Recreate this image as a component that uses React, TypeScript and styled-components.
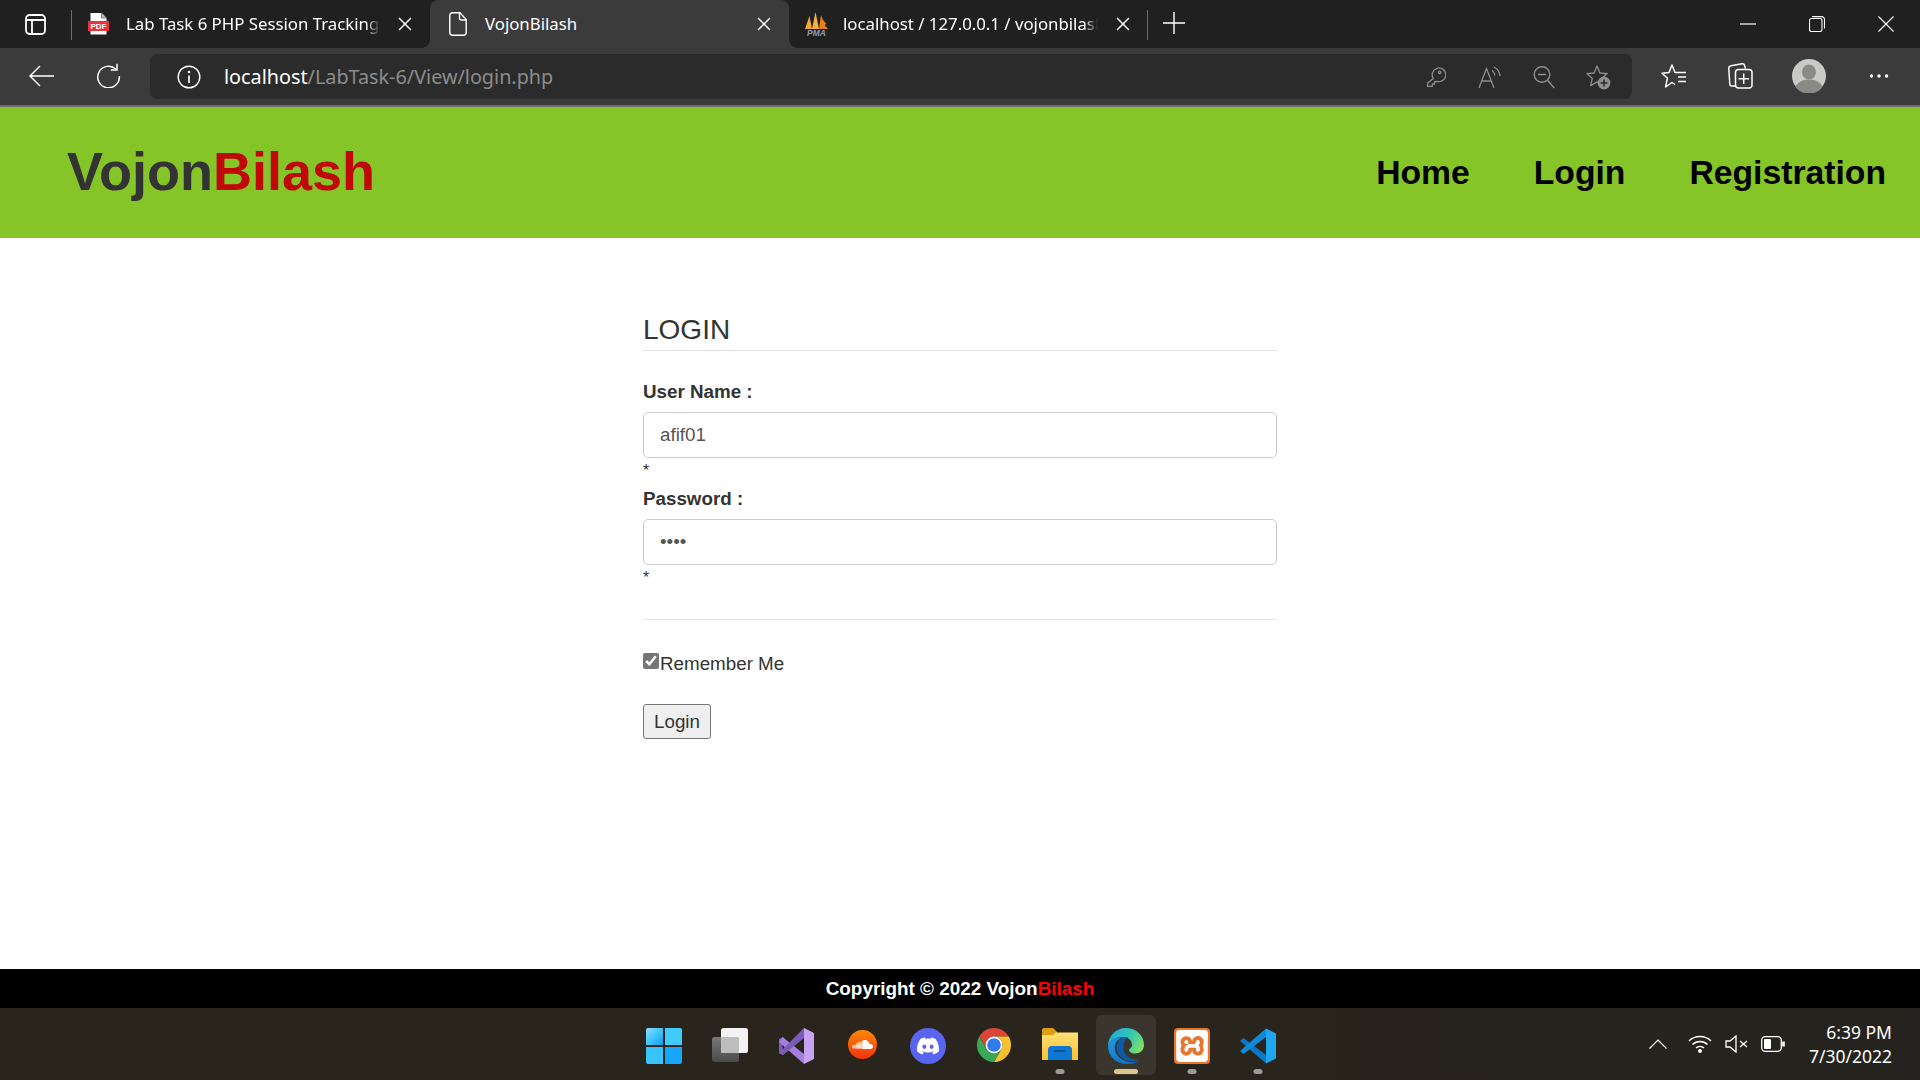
import type { FC, ReactNode } from 'react'
import { FaDiscord, FaSoundcloud } from 'react-icons/fa'
import { SiXampp } from 'react-icons/si'
import styled, { createGlobalStyle } from 'styled-components'

const GlobalStyle = createGlobalStyle`
  html, body {
    margin: 0;
    padding: 0;
    background: #fff;
  }
  * {
    box-sizing: border-box;
  }
`

const TABS: Array<{
  title: string
  icon: ReactNode
  active?: boolean
  width: number
  pad: number
  gap: number
  right: number
}> = [
  { title: 'Lab Task 6 PHP Session Tracking', icon: <PdfIcon />, width: 358, pad: 16, gap: 17, right: 18 },
  { title: 'VojonBilash', icon: <DocIcon />, active: true, width: 359, pad: 19, gap: 18, right: 18 },
  { title: 'localhost / 127.0.0.1 / vojonbilash', icon: <PmaIcon />, width: 358, pad: 15, gap: 14, right: 17 }
]

const App: FC = () => {
  return (
    <Page>
      <GlobalStyle />
      <TabStrip>
        <PanelButton>
          <svg width="21" height="21" viewBox="0 0 21 21" fill="none" stroke="#fff" strokeWidth="1.8">
            <rect x="1" y="1" width="19" height="19" rx="3.5" />
            <path d="M1 6h19M7 6v14" />
          </svg>
        </PanelButton>
        <StripDivider />
        {TABS.map((tab) => (
          <Tab key={tab.title} $active={tab.active} $width={tab.width} $pad={tab.pad} $right={tab.right}>
            {tab.icon}
            <TabTitle $gap={tab.gap} $fade={!tab.active}>
              {tab.title}
            </TabTitle>
            <TabClose>
              <svg width="14" height="14" viewBox="0 0 14 14" stroke="#fff" strokeWidth="1.5">
                <path d="M1 1l12 12M13 1L1 13" />
              </svg>
            </TabClose>
          </Tab>
        ))}
        <StripDivider />
        <NewTab>
          <svg width="22" height="22" viewBox="0 0 22 22" stroke="#fff" strokeWidth="1.4">
            <path d="M11 0v22M0 11h22" />
          </svg>
        </NewTab>
        <WindowControls>
          <WindowButton>
            <svg width="16" height="16" viewBox="0 0 16 16" stroke="#fff" strokeWidth="1.2">
              <path d="M0 8h16" />
            </svg>
          </WindowButton>
          <WindowButton>
            <svg width="16" height="16" viewBox="0 0 16 16" fill="none" stroke="#fff" strokeWidth="1.1">
              <rect x="0.5" y="2.5" width="12.5" height="13" rx="2" />
              <path d="M3 0.6h9.5a3 3 0 0 1 3 3v9" />
            </svg>
          </WindowButton>
          <WindowButton>
            <svg width="16" height="16" viewBox="0 0 16 16" stroke="#fff" strokeWidth="1.2">
              <path d="M0.5 0.5l15 15M15.5 0.5l-15 15" />
            </svg>
          </WindowButton>
        </WindowControls>
      </TabStrip>

      <Toolbar>
        <ToolButton $width={67}>
          <svg width="25" height="22" viewBox="0 0 25 22" fill="none" stroke="#fff" strokeWidth="1.5">
            <path d="M25 11H1.5M11 1L1 11l10 10" />
          </svg>
        </ToolButton>
        <ToolButton $width={67}>
          <svg width="25" height="25" viewBox="0 0 25 25" fill="none" stroke="#fff" strokeWidth="1.5">
            <path d="M20 6.2A10.8 10.8 0 1 0 23.3 13" />
            <path d="M21 0.8v6.2h-6.2" />
          </svg>
        </ToolButton>
        <AddressBar>
          <svg width="24" height="24" viewBox="0 0 24 24" fill="none" stroke="#fff" strokeWidth="1.4">
            <circle cx="12" cy="12" r="10.8" />
            <path d="M12 10.5v7.5" strokeWidth="1.7" />
            <circle cx="12" cy="7" r="0.6" fill="#fff" />
          </svg>
          <Url>
            localhost<UrlPath>/LabTask-6/View/login.php</UrlPath>
          </Url>
          <AddressActions>
            <AddressAction>
              <svg width="20" height="22" viewBox="0 0 20 22" fill="none" stroke="#8f8f8f" strokeWidth="1.3">
                <path d="M7.3 12.5A6.8 6.8 0 1 1 11 15.3L8.6 15.6v2.4H6.3v2.4H1.6V17z" />
                <circle cx="13.6" cy="6.3" r="1.2" />
              </svg>
            </AddressAction>
            <AddressAction>
              <svg width="24" height="24" viewBox="0 0 24 24" fill="none" stroke="#8f8f8f" strokeWidth="1.3">
                <path d="M1 23L8.5 3.5 16 23M3.6 16h10" />
                <path d="M14 5.5a7 7 0 0 1 3 5M16 2a11 11 0 0 1 6 9" />
              </svg>
            </AddressAction>
            <AddressAction>
              <svg width="22" height="24" viewBox="0 0 22 24" fill="none" stroke="#8f8f8f" strokeWidth="1.4">
                <circle cx="9" cy="9.5" r="7.8" />
                <path d="M5 9.5h8M14.5 15.2l6.8 7.8" />
              </svg>
            </AddressAction>
            <AddressAction>
              <svg width="26" height="26" viewBox="0 0 26 26" fill="none">
                <path
                  d="M12 2l2.9 7 7.3.6-5.5 4.8 1.6 7.2L12 17.9l-6.3 3.7 1.6-7.2L1.8 9.6 9.1 9z"
                  stroke="#8f8f8f"
                  strokeWidth="1.3"
                  strokeLinejoin="round"
                />
                <circle cx="19" cy="19" r="6.4" fill="#8f8f8f" />
                <path d="M19 15.5v7M15.5 19h7" stroke="#2b2b2b" strokeWidth="1.5" />
              </svg>
            </AddressAction>
          </AddressActions>
        </AddressBar>
        <ToolGroup>
          <ToolButton $width={68}>
            <svg width="26" height="26" viewBox="0 0 26 26" fill="none" stroke="#fff" strokeWidth="1.5" strokeLinejoin="round">
              <path d="M17.5 9.5H14L11 2 8 9.5l-7 .8 5.4 4.8-1.8 8.9 6.4-4.5 3 2" />
              <path d="M17 9.5h8M17 14h8M17 18.5h8" />
            </svg>
          </ToolButton>
          <ToolButton $width={64}>
            <svg width="25" height="27" viewBox="0 0 25 27" fill="none" stroke="#fff" strokeWidth="1.5">
              <path d="M7.5 24L3.5 24c-1 0-1.500-.8-1.700-1.700L.8 6.5C.7 5 1.500 4 3 3.700L14 1.700c1.300-.2 2.300.5 2.600 1.800l.8 3" />
              <rect x="7.5" y="7.5" width="16.5" height="18.5" rx="3" />
              <path d="M15.7 11.5v10.5M10.500 16.700h10.500" />
            </svg>
          </ToolButton>
          <ToolButton $width={74}>
            <svg width="34" height="34" viewBox="0 0 34 34">
              <circle cx="17" cy="17" r="17" fill="#c9c9c5" />
              <ellipse cx="17" cy="13" rx="7" ry="7.6" fill="#8a8a86" />
              <path d="M3.5 28c2-5 7-7.5 13.5-7.5S28.5 23 30.5 28A17 17 0 0 1 3.5 28z" fill="#8a8a86" />
            </svg>
          </ToolButton>
          <ToolButton $width={66}>
            <svg width="20" height="6" viewBox="0 0 20 6" fill="#fff">
              <circle cx="2.5" cy="3" r="1.7" />
              <circle cx="10" cy="3" r="1.7" />
              <circle cx="17.5" cy="3" r="1.7" />
            </svg>
          </ToolButton>
        </ToolGroup>
      </Toolbar>

      <Header>
        <Logo>
          Vojon<LogoAccent>Bilash</LogoAccent>
        </Logo>
        <Nav>
          <NavLink>Home</NavLink>
          <NavLink>Login</NavLink>
          <NavLink>Registration</NavLink>
        </Nav>
      </Header>

      <Main>
        <LoginForm onSubmit={(e) => e.preventDefault()}>
          <FormTitle>LOGIN</FormTitle>
          <Rule />
          <Field>
            <FieldLabel>User Name :</FieldLabel>
            <TextInput type="text" defaultValue="afif01" />
            <Required>*</Required>
          </Field>
          <Field>
            <FieldLabel>Password :</FieldLabel>
            <TextInput type="password" defaultValue="1234" />
            <Required>*</Required>
          </Field>
          <LowerRule />
          <RememberRow>
            <RememberBox type="checkbox" defaultChecked />
            Remember Me
          </RememberRow>
          <SubmitButton type="submit">Login</SubmitButton>
        </LoginForm>
      </Main>

      <Footer>
        Copyright © 2022 Vojon<FooterAccent>Bilash</FooterAccent>
      </Footer>

      <Taskbar>
        <TaskIcons>
          <TaskCell>
            <StartIcon />
          </TaskCell>
          <TaskCell>
            <TaskViewIcon />
          </TaskCell>
          <TaskCell>
            <VisualStudioIcon />
          </TaskCell>
          <TaskCell>
            <SoundCloudBadge>
              <FaSoundcloud size={21} color="#fff" />
            </SoundCloudBadge>
          </TaskCell>
          <TaskCell>
            <DiscordBadge>
              <FaDiscord size={24} color="#fff" />
            </DiscordBadge>
          </TaskCell>
          <TaskCell>
            <ChromeIcon />
          </TaskCell>
          <TaskCell $dot>
            <ExplorerIcon />
          </TaskCell>
          <TaskCell $current>
            <EdgeIcon />
          </TaskCell>
          <TaskCell $dot>
            <XamppBadge>
              <SiXampp size={32} color="#fff" />
            </XamppBadge>
          </TaskCell>
          <TaskCell $dot>
            <VsCodeIcon />
          </TaskCell>
        </TaskIcons>
        <Tray>
          <svg width="18" height="10" viewBox="0 0 18 10" fill="none" stroke="#fff" strokeWidth="1.2">
            <path d="M0.5 9.5L9 1l8.5 8.5" />
          </svg>
          <TrayIcons>
            <svg width="24" height="18" viewBox="0 0 24 18" fill="none" stroke="#fff" strokeWidth="1.5">
              <path d="M1 6a16 16 0 0 1 22 0M4.5 9.5a11 11 0 0 1 15 0M8 13a6 6 0 0 1 8 0" />
              <circle cx="12" cy="16" r="1.2" fill="#fff" />
            </svg>
            <svg width="23" height="18" viewBox="0 0 23 18" fill="none" stroke="#fff" strokeWidth="1.3">
              <path d="M1 6v6h4l6 5V1L5 6z" />
              <path d="M15 6l7 6M22 6l-7 6" />
            </svg>
            <svg width="24" height="16" viewBox="0 0 24 16" fill="none" stroke="#fff" strokeWidth="1.3">
              <rect x="0.7" y="0.7" width="19.6" height="14.6" rx="3.5" />
              <rect x="3" y="3" width="7" height="10" rx="1" fill="#fff" stroke="none" />
              <path d="M22.5 5.5v5" strokeWidth="2.6" />
            </svg>
          </TrayIcons>
          <Clock>
            <ClockLine>6:39 PM</ClockLine>
            <ClockLine>7/30/2022</ClockLine>
          </Clock>
        </Tray>
      </Taskbar>
    </Page>
  )
}

function PdfIcon() {
  return (
    <svg width="21" height="24" viewBox="0 0 21 24">
      <path d="M2 0.5h11.5L19 6v17H2z" fill="#fff" stroke="#222" />
      <path d="M13.5 0.5V6H19z" fill="#bbb" stroke="#222" strokeWidth="0.5" />
      <rect x="0" y="9" width="21" height="10" fill="#e8343b" />
      <text x="10.5" y="17" textAnchor="middle" fontFamily="'Liberation Sans', sans-serif" fontSize="8" fontWeight="700" fill="#fff">
        PDF
      </text>
    </svg>
  )
}

function DocIcon() {
  return (
    <svg width="18" height="24" viewBox="0 0 18 24" fill="none" stroke="#fff" strokeWidth="1.4">
      <path d="M3.5 0.8h7.5l6.2 6.7v13a2.7 2.7 0 0 1-2.7 2.7h-11A2.7 2.7 0 0 1 .8 20.5v-17A2.7 2.7 0 0 1 3.5.8z" />
      <path d="M10.5 1v5a2 2 0 0 0 2 2h4.700" />
    </svg>
  )
}

function PmaIcon() {
  return (
    <svg width="25" height="25" viewBox="0 0 25 25">
      <path d="M1 17L5.5 4 8 17z" fill="#f7a531" />
      <path d="M8 17L11.500 0 15 17z" fill="#fab03c" />
      <path d="M15 17L17 3l2 5 3.5 4-2 1 3.500 4z" fill="#e8801a" />
      <text x="12.5" y="23.500" textAnchor="middle" fontFamily="'Liberation Sans', sans-serif" fontSize="8.5" fontWeight="700" fontStyle="italic" fill="#8f97bd">
        PMA
      </text>
    </svg>
  )
}

function StartIcon() {
  return (
    <svg width="36" height="36" viewBox="0 0 36 36">
      <defs>
        <linearGradient id="startTile" x1="0" y1="0" x2="1" y2="1">
          <stop offset="0" stopColor="#8fdcff" />
          <stop offset="0.5" stopColor="#3ec6fb" />
          <stop offset="1" stopColor="#0f9ffa" />
        </linearGradient>
      </defs>
      <path d="M2 0h15v17H0V2a2 2 0 0 1 2-2z" fill="url(#startTile)" />
      <path d="M19 0h15a2 2 0 0 1 2 2v15H19z" fill="#3fcbfd" />
      <path d="M0 19h17v17H2a2 2 0 0 1-2-2z" fill="#38c3fc" />
      <path d="M19 19h17v15a2 2 0 0 1-2 2H19z" fill="#16a6fb" />
    </svg>
  )
}

function TaskViewIcon() {
  return (
    <svg width="36" height="36" viewBox="0 0 36 36">
      <defs>
        <linearGradient id="taskBack" x1="0" y1="0" x2="0" y2="1">
          <stop offset="0" stopColor="#777" />
          <stop offset="1" stopColor="#4b4b4b" />
        </linearGradient>
      </defs>
      <rect x="0" y="9" width="27" height="25" rx="2.5" fill="url(#taskBack)" />
      <rect x="9" y="0" width="27" height="25" rx="2.5" fill="#f2f2f2" />
      <rect x="9" y="9" width="18" height="16" rx="1.5" fill="#bdbdbd" />
    </svg>
  )
}

function VisualStudioIcon() {
  return (
    <svg width="36" height="36" viewBox="0 0 36 36">
      <path d="M1 11l4-2 8 9-8 9-4-2zM4.5 14v8l3.5-4z" fill="#7c5cb6" fillRule="evenodd" />
      <path d="M4.5 9l21.5 17v10L1 14z" fill="#a47fe0" />
      <path d="M26 0v10L5 27l-4-2z" fill="#7a5bb5" />
      <path d="M26 0l10 5v26l-10 5z" fill="#c7a2f3" />
    </svg>
  )
}

function ChromeIcon() {
  return (
    <svg width="34" height="34" viewBox="2 2 44 44">
      <path d="M4.95 13A22 22 0 0 1 43.05 13H24A11 11 0 0 0 14.47 29.5z" fill="#db4437" />
      <path d="M43.05 13A22 22 0 0 1 24 46L33.53 29.5A11 11 0 0 0 24 13z" fill="#fbc02d" />
      <path d="M24 46A22 22 0 0 1 4.95 13L14.47 29.5A11 11 0 0 0 33.53 29.5z" fill="#3aa757" />
      <circle cx="24" cy="24" r="11" fill="#fff" />
      <circle cx="24" cy="24" r="8.8" fill="#2f7de8" />
    </svg>
  )
}

function ExplorerIcon() {
  return (
    <svg width="36" height="34" viewBox="0 0 36 34">
      <defs>
        <linearGradient id="folderBody" x1="0" y1="0" x2="0" y2="1">
          <stop offset="0" stopColor="#ffdf75" />
          <stop offset="1" stopColor="#fcc02f" />
        </linearGradient>
      </defs>
      <path d="M0 2a2 2 0 0 1 2-2h9l4 4v6H0z" fill="#dd9f12" />
      <path d="M0 7h11l3-2.5h22V32H0z" fill="url(#folderBody)" />
      <path d="M6 32h24V22a4 4 0 0 0-4-4H10a4 4 0 0 0-4 4z" fill="#0f78d4" />
      <rect x="12" y="22" width="12" height="2" rx="1" fill="#0a4f92" />
    </svg>
  )
}

function EdgeIcon() {
  return (
    <svg width="36" height="36" viewBox="0 0 36 36">
      <defs>
        <linearGradient id="edgeTop" x1="0" y1="0.3" x2="1" y2="0.7">
          <stop offset="0" stopColor="#1fa8e0" />
          <stop offset="0.55" stopColor="#35c9b0" />
          <stop offset="1" stopColor="#86e060" />
        </linearGradient>
        <linearGradient id="edgeLow" x1="0" y1="0" x2="0.7" y2="1">
          <stop offset="0" stopColor="#1b9be6" />
          <stop offset="1" stopColor="#1070c4" />
        </linearGradient>
      </defs>
      <path
        d="M0 18C0 8 8 0 18 0c10 0 18 7.5 18 17 0 5-4 8.5-9 8.5-3 0-6-1.5-6-3.5 0-1.5 3-2 3-5.5 0-4-4-7.5-9-7.500C8 9 2 12 0 18z"
        fill="url(#edgeTop)"
      />
      <path d="M0 18c2-6 8-9 15-9-6 2-9 7-8 13 1 6 7 11 15 12 3 .4 7 0 10-2-3.500 3-8 4-13 4C8 36 0 28 0 18z" fill="url(#edgeLow)" />
      <path d="M15 9c-4 2-7 7.5-6 13 1 6 7 10.5 13 11 3.5.2 7-.5 10-2.500-3 1.500-8 1-11-1-5-3-6-8-5.500-12.500.5-3.500 2-6.500 5-7.500z" fill="#0e5ba8" />
    </svg>
  )
}

function VsCodeIcon() {
  return (
    <svg width="36" height="36" viewBox="0 0 36 36">
      <path d="M3.5 10L26 27v8.5L0 13z" fill="#0a78c4" />
      <path d="M26 0.5V9L3.5 26 0 23z" fill="#0f8ad9" />
      <path d="M26 0.5l10 5v25l-10 5z" fill="#20a6ef" />
    </svg>
  )
}

const Page = styled.div`
  width: 1920px;
  height: 1080px;
  display: flex;
  flex-direction: column;
  overflow: hidden;
  font-family: 'Liberation Sans', Arial, sans-serif;
`

const TabStrip = styled.div`
  height: 48px;
  flex: none;
  display: flex;
  align-items: stretch;
  background: #202020;
`

const PanelButton = styled.div`
  width: 71px;
  padding-left: 25px;
  display: flex;
  align-items: center;
`

const StripDivider = styled.div`
  width: 1px;
  height: 30px;
  margin-top: 10px;
  background: #6b6b6b;
`

const Tab = styled.div<{ $active?: boolean; $width: number; $pad: number; $right: number }>`
  position: relative;
  width: ${(props) => props.$width}px;
  display: flex;
  align-items: center;
  padding-left: ${(props) => props.$pad}px;
  padding-right: ${(props) => props.$right}px;
  background: ${(props) => (props.$active ? '#3b3b3b' : 'transparent')};
  border-radius: 8px 8px 0 0;

  &::before,
  &::after {
    content: '';
    display: ${(props) => (props.$active ? 'block' : 'none')};
    position: absolute;
    bottom: 0;
    width: 8px;
    height: 8px;
  }

  &::before {
    left: -8px;
    background: radial-gradient(circle at 0 0, transparent 7.5px, #3b3b3b 8px);
  }

  &::after {
    right: -8px;
    background: radial-gradient(circle at 100% 0, transparent 7.5px, #3b3b3b 8px);
  }
`

const TabTitle = styled.div<{ $gap: number; $fade: boolean }>`
  flex: 1;
  min-width: 0;
  margin: -2px 18px 0 ${(props) => props.$gap}px;
  font-family: 'Noto Sans', sans-serif;
  font-size: 16.8px;
  color: #fff;
  white-space: nowrap;
  ${(props) =>
    props.$fade &&
    `mask-image: linear-gradient(to right, #000 calc(100% - 14px), transparent);`}
`

const TabClose = styled.div`
  width: 14px;
  height: 14px;
  flex: none;
  display: flex;
`

const NewTab = styled.div`
  width: 52px;
  display: flex;
  align-items: center;
  justify-content: center;
  margin-top: -2px;
`

const WindowControls = styled.div`
  margin-left: auto;
  display: flex;
`

const WindowButton = styled.div`
  width: 69px;
  display: flex;
  align-items: center;
  justify-content: center;
`

const Toolbar = styled.div`
  height: 59px;
  flex: none;
  display: flex;
  align-items: stretch;
  padding: 6px 8px 8px;
  background: #3b3b3b;
  border-bottom: 2px solid #6c6c6c;
`

const ToolButton = styled.div<{ $width: number }>`
  width: ${(props) => props.$width}px;
  flex: none;
  display: flex;
  align-items: center;
  justify-content: center;
`

const ToolGroup = styled.div`
  display: flex;
  margin-left: 8px;
`

const AddressBar = styled.div`
  flex: 1;
  min-width: 0;
  height: 45px;
  margin-left: 8px;
  display: flex;
  align-items: center;
  padding: 0 7px 0 27px;
  background: #2b2b2b;
  border-radius: 7px;
`

const Url = styled.div`
  margin-left: 23px;
  font-family: 'Noto Sans', sans-serif;
  font-size: 19.8px;
  color: #fff;
`

const UrlPath = styled.span`
  color: #8c8c8c;
`

const AddressActions = styled.div`
  margin-left: auto;
  display: flex;
`

const AddressAction = styled.div`
  width: 54px;
  display: flex;
  align-items: center;
  justify-content: center;
`

const Header = styled.header`
  height: 131px;
  flex: none;
  display: flex;
  align-items: center;
  justify-content: space-between;
  padding: 0 34px 0 67px;
  background: #85c527;
`

const Logo = styled.div`
  margin-top: -3px;
  font-size: 54px;
  font-weight: 700;
  color: #333;
`

const LogoAccent = styled.span`
  color: #c00808;
`

const Nav = styled.nav`
  display: flex;
  gap: 64px;
  margin-top: -1px;
`

const NavLink = styled.a`
  font-size: 33.7px;
  font-weight: 700;
  color: #000;
`

const Main = styled.main`
  flex: 1;
  background: #fff;
`

const LoginForm = styled.form`
  width: 634px;
  margin: 0 auto;
  padding-top: 75px;
  font-size: 18.8px;
  line-height: 28px;
  color: #333;
`

const FormTitle = styled.h3`
  margin: 0 0 3px;
  font-size: 28px;
  font-weight: 400;
  line-height: 34px;
`

const Rule = styled.hr`
  margin: 0;
  border: 0;
  border-top: 1px solid #e2e2e2;
`

const LowerRule = styled(Rule)`
  margin-top: 32px;
`

const Field = styled.div`
  margin-top: 27px;

  & + & {
    margin-top: 5px;
  }
`

const FieldLabel = styled.label`
  display: block;
  margin-bottom: 6px;
  font-weight: 700;
`

const TextInput = styled.input`
  display: block;
  width: 100%;
  height: 46px;
  padding: 0 16px;
  font-family: inherit;
  font-size: 18.8px;
  color: #555;
  background: #fff;
  border: 1px solid #ccc;
  border-radius: 5px;
  outline: none;
`

const Required = styled.div`
  height: 22px;
  padding-top: 2px;
  font-size: 16px;
  line-height: 22px;
`

const RememberRow = styled.label`
  display: flex;
  align-items: flex-start;
  margin-top: 30px;
`

const RememberBox = styled.input`
  width: 16px;
  height: 16px;
  margin: 3px 1px 0 0;
  accent-color: #767676;
`

const SubmitButton = styled.button`
  display: block;
  width: 68px;
  height: 35px;
  margin-top: 26px;
  padding: 0;
  font-family: inherit;
  font-size: 18.8px;
  color: #333;
  background: #efefef;
  border: 1px solid #767676;
  border-radius: 3px;
`

const Footer = styled.footer`
  height: 39px;
  flex: none;
  display: flex;
  align-items: center;
  justify-content: center;
  font-size: 18.9px;
  font-weight: 700;
  color: #fff;
  background: #000;
  white-space: pre;
`

const FooterAccent = styled.span`
  color: #f00;
`

const Taskbar = styled.div`
  height: 72px;
  flex: none;
  display: flex;
  align-items: stretch;
  padding-left: 634px;
  background: linear-gradient(to right, #2a251c 0%, #2a251c 60%, #24231f 100%);
`

const TaskIcons = styled.div`
  display: flex;
  gap: 6px;
  padding: 7px 0 5px;
`

const TaskCell = styled.div<{ $dot?: boolean; $current?: boolean }>`
  position: relative;
  width: 60px;
  display: flex;
  justify-content: center;
  padding-top: 13px;
  border-radius: 6px;
  background: ${(props) => (props.$current ? '#3a352d' : 'transparent')};

  &::after {
    content: '';
    display: ${(props) => (props.$dot || props.$current ? 'block' : 'none')};
    position: absolute;
    bottom: 1px;
    left: 50%;
    transform: translateX(-50%);
    width: ${(props) => (props.$current ? 24 : 9)}px;
    height: 5px;
    border-radius: 3px;
    background: ${(props) => (props.$current ? '#dcc48e' : '#9a9a9a')};
  }
`

const RoundBadge = styled.div`
  display: flex;
  align-items: center;
  justify-content: center;
  border-radius: 50%;
`

const SoundCloudBadge = styled(RoundBadge)`
  width: 29px;
  height: 29px;
  margin-top: 2px;
  background: linear-gradient(#ff8a00, #f0320f);
`

const DiscordBadge = styled(RoundBadge)`
  width: 36px;
  height: 36px;
  background: #5865f2;
`

const XamppBadge = styled.div`
  width: 36px;
  height: 36px;
  display: flex;
  align-items: center;
  justify-content: center;
  border-radius: 4px;
  background: #e8762c;
`

const Tray = styled.div`
  margin-left: auto;
  display: flex;
  align-items: center;
  padding-right: 28px;
`

const TrayIcons = styled.div`
  display: flex;
  align-items: center;
  gap: 13px;
  margin-left: 21px;
`

const Clock = styled.div`
  width: 107px;
  text-align: right;
  font-family: 'Noto Sans', sans-serif;
  font-size: 17.5px;
  line-height: 24px;
  color: #fff;
`

const ClockLine = styled.div`
  white-space: nowrap;
`

export default App
